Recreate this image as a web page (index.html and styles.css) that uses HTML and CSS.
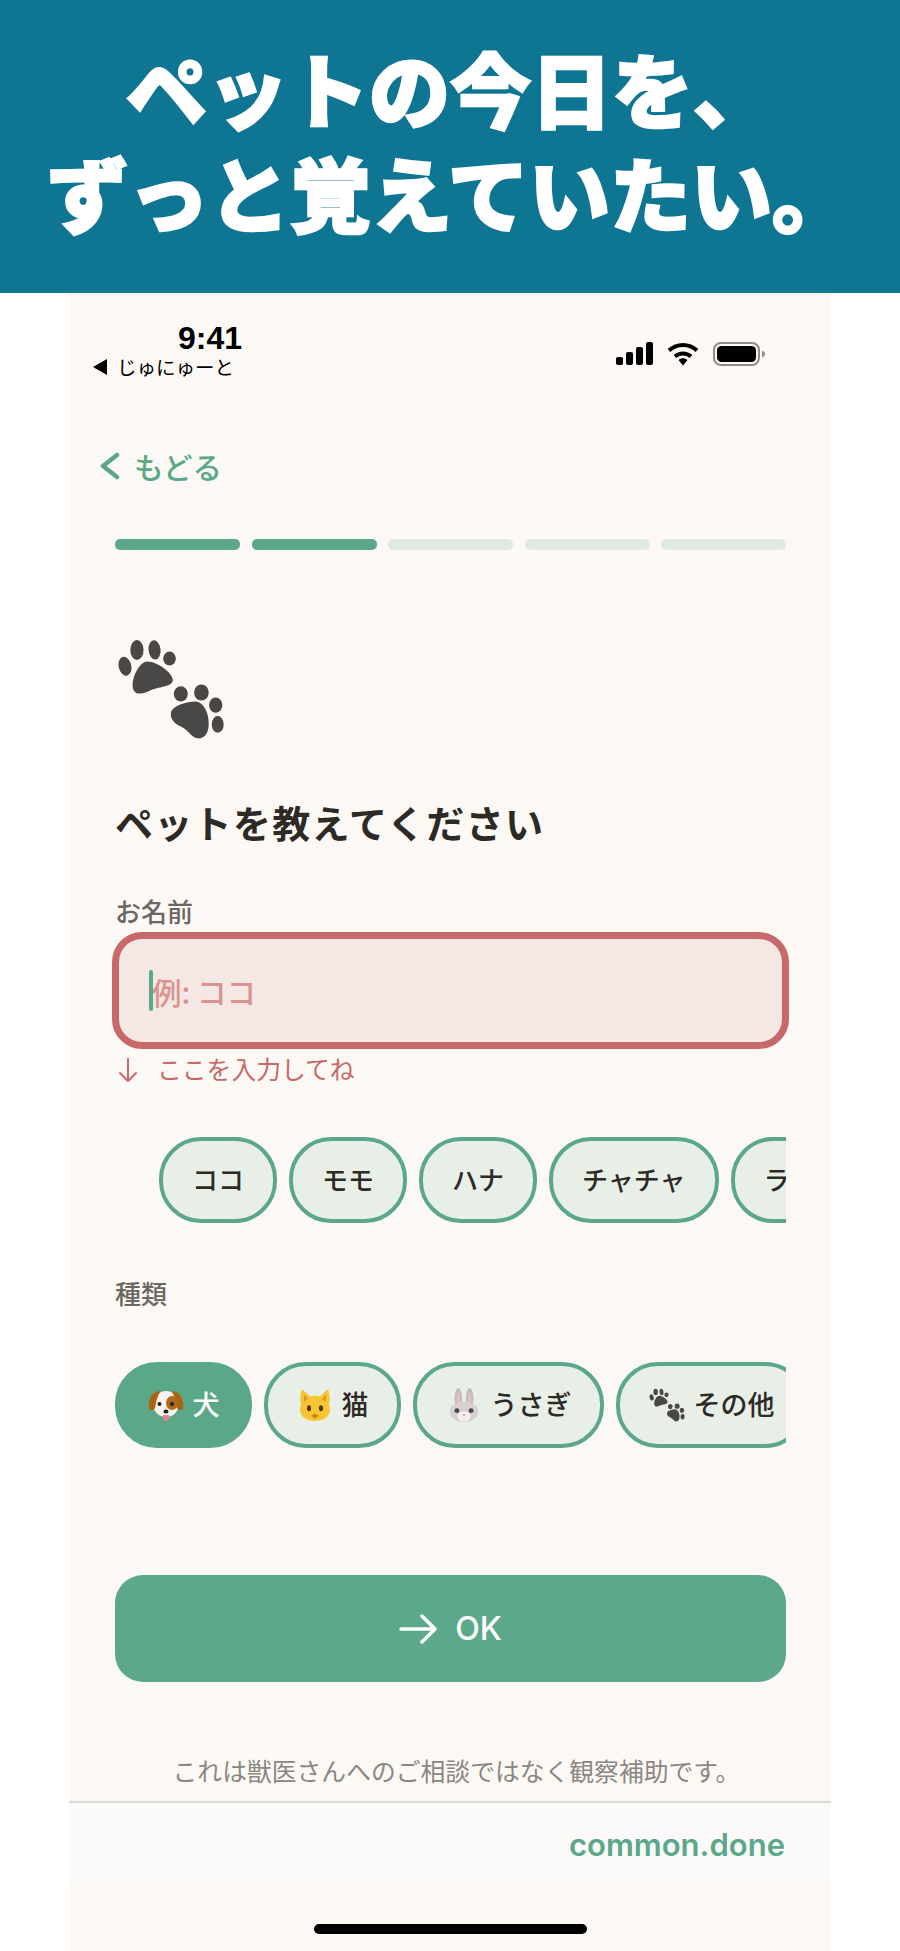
FILE: index.html
```
<!DOCTYPE html>
<html lang="ja">
<head>
    <meta charset="UTF-8">
    <meta name="viewport" content="width=device-width, initial-scale=1.0">
    <title>ペットを教えてください</title>
    <link rel="stylesheet" href="styles.css">
</head>
<body>
    <svg class="defs" width="0" height="0" aria-hidden="true">
        <symbol id="paws" viewBox="170 655 325 305">
            <g fill="#4a4846">
                <ellipse cx="230" cy="690" rx="20" ry="30"/>
                <ellipse cx="283" cy="690" rx="18" ry="29" transform="rotate(-6 283 690)"/>
                <ellipse cx="328" cy="716" rx="19" ry="21"/>
                <ellipse cx="194" cy="739" rx="19" ry="29" transform="rotate(-12 194 739)"/>
                <path d="M262 725C290 725 340 760 338 782C336 800 300 800 275 810C250 822 225 830 218 805C212 780 235 725 262 725Z"/>
                <ellipse cx="362" cy="822" rx="21" ry="23"/>
                <ellipse cx="424" cy="818" rx="22" ry="24"/>
                <ellipse cx="467" cy="856" rx="20" ry="23"/>
                <ellipse cx="473" cy="914" rx="18" ry="25"/>
                <path d="M405 845C430 845 448 880 446 915C445 945 430 958 412 956C392 952 385 930 362 920C340 910 328 895 333 875C340 858 380 845 405 845Z"/>
            </g>
        </symbol>
    </svg>

    <header class="banner">
        <p>ペットの今日を、</p>
        <p>ずっと覚えていたい。</p>
    </header>

    <div class="app">
        <div class="status">
            <div class="status-left">
                <span class="clock">9:41</span>
                <span class="return"><i class="return-arrow"></i>じゅにゅーと</span>
            </div>
            <div class="status-right">
                <svg width="37" height="23" viewBox="0 0 37 23" fill="#000">
                    <rect x="0" y="15" width="7" height="8" rx="2"/>
                    <rect x="10" y="10" width="7" height="13" rx="2"/>
                    <rect x="20" y="5" width="7" height="18" rx="2"/>
                    <rect x="30" y="0" width="7" height="23" rx="2"/>
                </svg>
                <svg width="32" height="24" viewBox="0 0 32 24" fill="none" stroke="#000" stroke-width="4">
                    <path d="M2 8.5C10 1 22 1 30 8.5"/>
                    <path d="M8 14.5C12.500 10.500 19.500 10.500 24 14.500"/>
                    <path d="M11.500 18L16 23.500L20.500 18C18 15.800 14 15.800 11.500 18Z" fill="#000" stroke="none"/>
                </svg>
                <svg width="52" height="24" viewBox="0 0 52 24">
                    <rect x="1" y="1" width="45" height="22" rx="7" fill="none" stroke="#8f8d89" stroke-width="2"/>
                    <rect x="4" y="4" width="39" height="16" rx="4.500" fill="#000"/>
                    <path d="M49 8.500C51 9.500 52 10.500 52 12C52 13.500 51 14.500 49 15.500Z" fill="#8f8d89"/>
                </svg>
            </div>
        </div>

        <a class="back">
            <svg width="22" height="28" viewBox="0 0 22 28" fill="none" stroke="#5aa888" stroke-width="4.500" stroke-linecap="round" stroke-linejoin="round">
                <path d="M18 3L4 14L18 25"/>
            </svg>
            もどる
        </a>

        <main class="content">
            <div class="progress">
                <span class="step done"></span>
                <span class="step done"></span>
                <span class="step"></span>
                <span class="step"></span>
                <span class="step"></span>
            </div>

            <svg class="pet-icon" width="108" height="102"><use href="#paws"/></svg>

            <h1>ペットを教えてください</h1>

            <label class="field-label">お名前</label>
            <div class="name-input">
                <i class="caret"></i>
                <span class="placeholder">例: ココ</span>
            </div>
            <div class="hint">
                <svg width="20" height="25" viewBox="0 0 20 25" fill="none" stroke="#c7686a" stroke-width="2" stroke-linecap="round" stroke-linejoin="round">
                    <path d="M10 1V23M2 15L10 23L18 15"/>
                </svg>
                <span class="hint-text">ここを入力してね</span>
            </div>

            <div class="chips names">
                <button class="chip">ココ</button>
                <button class="chip">モモ</button>
                <button class="chip">ハナ</button>
                <button class="chip">チャチャ</button>
                <button class="chip">ラテ</button>
            </div>

            <label class="field-label kind-label">種類</label>
            <div class="chips kinds">
                <button class="chip active">
                    <svg class="emoji" viewBox="0 0 36 32">
                        <ellipse cx="18" cy="15" rx="13" ry="13" fill="#f7f3ee"/>
                        <path d="M8 3C3 5 0 12 1 19C2 22 5 22 7 19C8 13 9 8 12 3C11 2 9 2 8 3Z" fill="#a9650f"/>
                        <path d="M28 3C33 5 36 12 35 19C34 22 31 22 29 19C28 13 27 8 24 3C25 2 27 2 28 3Z" fill="#a9650f"/>
                        <ellipse cx="24" cy="14" rx="6" ry="7" fill="#b06a1c"/>
                        <circle cx="11.500" cy="15" r="2" fill="#222"/>
                        <circle cx="24" cy="15" r="2" fill="#222"/>
                        <path d="M15 26H21V29C21 33 15 33 15 29Z" fill="#ec7f93"/>
                        <ellipse cx="18" cy="22.500" rx="2.500" ry="2" fill="#222"/>
                    </svg>
                    犬
                </button>
                <button class="chip">
                    <svg class="emoji narrow" viewBox="3 0 30 32" preserveAspectRatio="none">
                        <path d="M5 1L13 8C16 7 20 7 23 8L31 1C33 7 33 11 32 15C34 20 33 25 29 28C23 32 13 32 7 28C3 25 2 20 4 15C3 11 3 7 5 1Z" fill="#f7c531"/>
                        <path d="M7 6L11 10L7 13Z M29 6L25 10L29 13Z" fill="#e0962a"/>
                        <ellipse cx="12" cy="19" rx="2" ry="2.800" fill="#4a3510"/>
                        <ellipse cx="24" cy="19" rx="2" ry="2.800" fill="#4a3510"/>
                        <path d="M14 26L18 24L22 26L18 29Z" fill="#c98a1e"/>
                    </svg>
                    猫
                </button>
                <button class="chip">
                    <svg class="emoji" viewBox="0 0 36 36">
                        <ellipse cx="12" cy="11" rx="4" ry="11" fill="#c4bcbe"/>
                        <ellipse cx="24" cy="11" rx="4" ry="11" fill="#c4bcbe"/>
                        <ellipse cx="12" cy="12" rx="1.800" ry="8" fill="#e6bcc4"/>
                        <ellipse cx="24" cy="12" rx="1.800" ry="8" fill="#e6bcc4"/>
                        <ellipse cx="18" cy="25" rx="15" ry="11" fill="#d6d0d2"/>
                        <ellipse cx="18" cy="30" rx="7" ry="5.500" fill="#f4f0f0"/>
                        <circle cx="10.500" cy="24" r="2.600" fill="#4f4347"/>
                        <circle cx="25.500" cy="24" r="2.600" fill="#4f4347"/>
                        <path d="M16 28H20L18 30Z" fill="#e57f92"/>
                    </svg>
                    うさぎ
                </button>
                <button class="chip">
                    <svg class="emoji" viewBox="0 0 36 34"><use href="#paws"/></svg>
                    その他
                </button>
            </div>

            <button class="ok">
                <svg width="38" height="30" viewBox="0 0 38 30" fill="none" stroke="#fff" stroke-width="3.500" stroke-linecap="round" stroke-linejoin="round">
                    <path d="M2 15H35M23 2L36 15L23 28"/>
                </svg>
                <span class="ok-text">OK</span>
            </button>

            <p class="note">これは獣医さんへのご相談ではなく観察補助です。</p>
        </main>

        <footer class="footer">
            <span class="done-link">common.done</span>
        </footer>
        <div class="home-bar"></div>
    </div>
</body>
</html>
```

FILE: styles.css
```
* {
    box-sizing: border-box;
}

html, body {
    height: 100%;
}

body {
    margin: 0;
    background-color: #fff;
    font-family: "Noto Sans CJK JP", "Noto Sans", sans-serif;
    overflow: hidden;
}

.defs {
    position: absolute;
}

.banner {
    height: 293px;
    padding-top: 35px;
    background-color: #0e7593;
    color: #fff;
    text-align: center;
    font-size: 81px;
    font-weight: 900;
    line-height: 104px;
    -webkit-text-stroke: 2.500px #fff;
}

.banner p {
    margin: 0;
}

.app {
    width: 762px;
    margin-left: 69px;
    background-color: #fcf9f4;
    height: 1658px;
}

/* barra de status */
.status {
    height: 107px;
    padding: 29px 55px 0 24px;
    display: flex;
    justify-content: space-between;
}

.status-left {
    display: flex;
    flex-direction: column;
    align-items: flex-start;
}

.clock {
    margin-left: 85px;
    font-family: "Liberation Sans", sans-serif;
    font-size: 32px;
    font-weight: 700;
    line-height: 33px;
    color: #000;
}

.return {
    display: flex;
    align-items: center;
    font-size: 19.500px;
    line-height: 24px;
    color: #000;
}

.return-arrow {
    width: 0;
    height: 0;
    margin-right: 10px;
    border-top: 8px solid transparent;
    border-bottom: 8px solid transparent;
    border-right: 14px solid #000;
}

.status-right {
    display: flex;
    align-items: flex-start;
    gap: 14px;
    padding-top: 20px;
    margin-right: 11px;
}

.back {
    height: 34px;
    margin-top: 49px;
    padding-left: 30px;
    display: flex;
    align-items: center;
    gap: 13px;
    color: #5aa888;
    font-size: 29.500px;
    font-weight: 500;
    line-height: 34px;
}

.content {
    padding: 1px 45px 0 46px;
}

.progress {
    margin-top: 55px;
    display: flex;
    gap: 11.500px;
}

.step {
    flex: 1;
    height: 11px;
    border-radius: 5px;
    background-color: #dfeae2;
}

.step.done {
    background-color: #5ba88a;
}

.pet-icon {
    display: block;
    margin: 88px 0 0 2px;
}

h1 {
    margin: 58px 0 0;
    font-size: 38px;
    font-weight: 700;
    line-height: 48px;
    letter-spacing: 1.300px;
    color: #2d2a26;
}

.field-label {
    display: block;
    margin-top: 48px;
    font-size: 26px;
    font-weight: 500;
    line-height: 33px;
    color: #6b6763;
}

.name-input {
    height: 117px;
    margin: 5px -3px 0;
    padding-left: 30px;
    display: flex;
    align-items: center;
    background-color: #f5e7e3;
    border: 7px solid #c7686a;
    border-radius: 30px;
}

.caret {
    width: 4px;
    height: 41px;
    border-radius: 2px;
    background-color: #5aa888;
}

.placeholder {
    margin-left: -1px;
    font-size: 29.500px;
    font-weight: 500;
    color: #d99391;
}

.hint {
    height: 32px;
    margin-top: 5px;
    padding-left: 3px;
    display: flex;
    align-items: center;
    gap: 19px;
    line-height: 32px;
    color: #c7686a;
}

.hint-text {
    margin-top: -4px;
    font-size: 24.800px;
}

.chips {
    display: flex;
    gap: 12px;
    overflow: hidden;
}

.names {
    margin-top: 51px;
    padding-left: 44px;
}

.names .chip {
    padding: 0 29px 3px;
}

.kinds {
    margin-top: 53.500px;
}

.kinds .chip {
    gap: 9px;
    font-size: 27px;
}

.kind-label {
    margin-top: 52.500px;
}

.chip {
    flex: none;
    height: 86px;
    padding: 0 28.500px 3px;
    display: flex;
    align-items: center;
    gap: 10px;
    border: 4px solid #5aa888;
    border-radius: 42px;
    background-color: #e8efe6;
    color: #2d2a26;
    font-family: inherit;
    font-size: 26px;
    font-weight: 500;
}

.chip.active {
    background-color: #5aa888;
    color: #fff;
}

.emoji {
    width: 36px;
    height: 34px;
    margin-top: 3px;
}

.emoji.narrow {
    width: 30px;
    margin-left: 3px;
    margin-right: 3px;
}

.ok {
    width: 100%;
    height: 107px;
    margin-top: 127px;
    display: flex;
    justify-content: center;
    align-items: center;
    gap: 18px;
    border: none;
    border-radius: 28px;
    background-color: #5ca88a;
    color: #fff;
    font-family: inherit;
}

.ok-text {
    font-family: Inter, sans-serif;
    font-size: 32px;
    font-weight: 500;
}

.note {
    margin: 72px 0 0;
    padding-left: 12px;
    text-align: center;
    font-size: 24.800px;
    line-height: 32px;
    color: #8a8783;
}

.footer {
    height: 84px;
    margin-top: 15px;
    padding: 24px 46px 0 0;
    text-align: right;
    border-top: 2px solid #dcdad6;
    background-color: #fbfaf8;
}

.done-link {
    font-family: Inter, sans-serif;
    font-size: 31px;
    font-weight: 600;
    line-height: 36px;
    color: #5aa888;
}

.home-bar {
    width: 273px;
    height: 10px;
    margin: 39px auto 0;
    border-radius: 5px;
    background-color: #000;
}
```
